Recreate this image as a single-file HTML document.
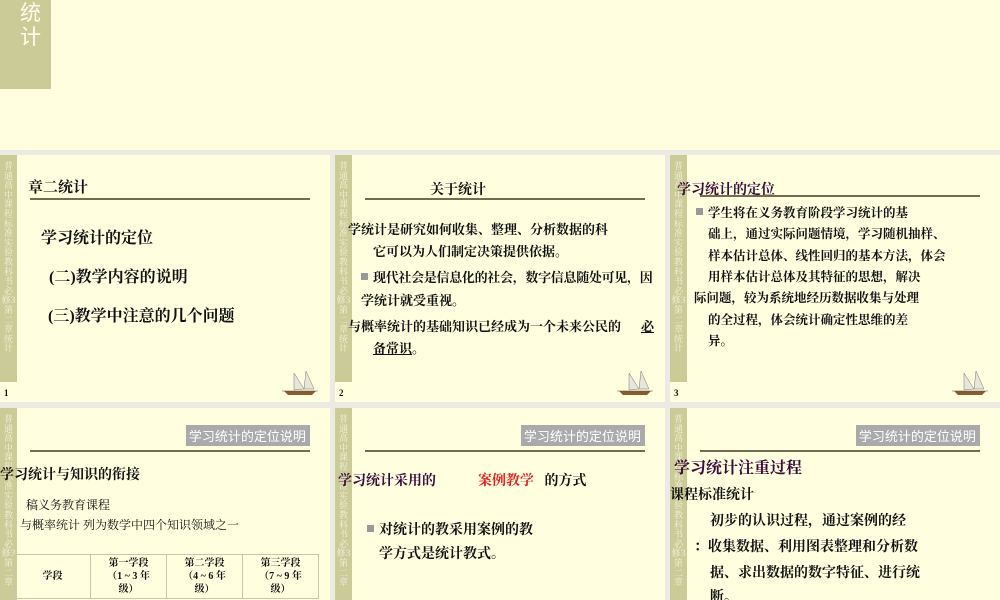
<!DOCTYPE html><html><head><meta charset="utf-8"><style>
*{margin:0;padding:0;box-sizing:border-box}
html,body{width:1000px;height:600px;overflow:hidden}
body{background:#ebebe4;font-family:"Liberation Serif","Noto Serif CJK SC","Noto Sans CJK SC",serif;color:#111;position:relative}
.top{position:absolute;left:0;top:0;width:1000px;height:150px;background:#ffffe0}
.tsb{position:absolute;left:0;top:0;width:51px;height:89px;background:#cbcb98;color:#fffff0;font-family:"Noto Sans CJK SC",sans-serif;font-size:21px;line-height:24px;padding-left:20px;}
.s{position:absolute;width:330px;background:#ffffe0;overflow:hidden}
.sb{position:absolute;left:0;top:0;width:17px;height:227px;background:#cbcb98;color:#f2f2dc;font-size:9px;line-height:9.6px;text-align:center;padding-top:6px;font-family:"Noto Serif CJK SC",serif;word-break:break-all;overflow:hidden}
.ln{position:absolute;left:30px;width:280px;height:2px;background:#6e6e55;top:43px}
.t{position:absolute;white-space:nowrap;font-weight:bold}
.n{position:absolute;left:4px;top:233px;font-size:9px;font-weight:bold}
.ship{position:absolute;left:282px;top:214px}
.gb{position:absolute;left:186px;top:17px;width:124px;height:21px;background:#aaaaaa;color:#fff;font-size:13px;line-height:21px;font-family:"Noto Sans CJK SC",sans-serif}
.sq{display:inline-block;width:7px;height:7px;background:#999;margin-right:5px;vertical-align:2px}
table{position:absolute;left:14px;top:146px;border-collapse:collapse;font-size:10px;font-weight:bold}
td{border:1px solid #c8c8a8;text-align:center;width:76px;height:44px;line-height:13px}
</style></head><body>
<div class="top"><div class="tsb">统<br>计</div></div>

<svg width="0" height="0" style="position:absolute"><defs><g id="sh"><path d="M2 22 L34 22 L30 26 L6 26Z" fill="#8a5a30"/><path d="M12 21 L12 4 L22 20Z M22 20 L24 2 L32 20Z" fill="#e8e6d8" stroke="#777" stroke-width=".5"/><line x1="0" y1="22" x2="36" y2="22" stroke="#555" stroke-width=".6"/></g></defs></svg>

<div class="s" style="left:0;top:155px;height:247px">
<div class="sb">普通高中课程标准实验教科书 必修3 第二章 统计</div>
<div class="t" style="left:28px;top:21px;font-size:15px">章二统计</div>
<div class="ln"></div>
<div class="t" style="left:41px;top:70px;font-size:16px">学习统计的定位</div>
<div class="t" style="left:49px;top:109px;font-size:16px">(二)教学内容的说明</div>
<div class="t" style="left:48px;top:148px;font-size:16px">(三)教学中注意的几个问题</div>
<svg class="ship" width="36" height="28"><use href="#sh"/></svg>
<div class="n">1</div>
</div>

<div class="s" style="left:335px;top:155px;height:247px">
<div class="sb">普通高中课程标准实验教科书 必修3 第二章 统计</div>
<div class="t" style="left:95px;top:24px;font-size:14px">关于统计</div>
<div class="ln"></div>
<div class="t" style="left:13px;top:64px;font-size:13px">学统计是研究如何收集、整理、分析数据的科</div>
<div class="t" style="left:38px;top:86px;font-size:13px">它可以为人们制定决策提供依据。</div>
<div class="t" style="left:26px;top:112px;font-size:13px;letter-spacing:-0.3px"><span class="sq"></span>现代社会是信息化的社会，数字信息随处可见，因</div>
<div class="t" style="left:26px;top:135px;font-size:13px">学统计就受重视。</div>
<div class="t" style="left:13px;top:161px;font-size:13px">与概率统计的基础知识已经成为一个未来公民的</div>
<div class="t" style="left:306px;top:161px;font-size:13px"><u>必</u></div>
<div class="t" style="left:38px;top:183px;font-size:13px"><u>备常识</u>。</div>
<svg class="ship" width="36" height="28"><use href="#sh"/></svg>
<div class="n">2</div>
</div>

<div class="s" style="left:670px;top:155px;height:247px">
<div class="sb">普通高中课程标准实验教科书 必修3 第二章 统计</div>
<div class="t" style="left:7px;top:24px;font-size:14px;color:#3a0a3a">学习统计的定位</div>
<div class="ln" style="top:40px;left:30px"></div>
<div class="t" style="left:26px;top:48px;font-size:12.5px"><span class="sq"></span>学生将在义务教育阶段学习统计的基</div>
<div class="t" style="left:38px;top:69px;font-size:12.5px">础上，通过实际问题情境，学习随机抽样、</div>
<div class="t" style="left:38px;top:91px;font-size:12.5px">样本估计总体、线性回归的基本方法，体会</div>
<div class="t" style="left:38px;top:112px;font-size:12.5px">用样本估计总体及其特征的思想，解决</div>
<div class="t" style="left:24px;top:133px;font-size:12.5px">际问题，较为系统地经历数据收集与处理</div>
<div class="t" style="left:38px;top:155px;font-size:12.5px">的全过程，体会统计确定性思维的差</div>
<div class="t" style="left:38px;top:176px;font-size:12.5px">异。</div>
<svg class="ship" width="36" height="28"><use href="#sh"/></svg>
<div class="n">3</div>
</div>

<div class="s" style="left:0;top:408px;height:192px">
<div class="sb">普通高中课程标准实验教科书 必修3 第二章</div>
<div class="gb">&nbsp;学习统计的定位说明</div>
<div class="ln" style="top:42px"></div>
<div class="t" style="left:0;top:56px;font-size:14px">学习统计与知识的衔接</div>
<div class="t" style="left:26px;top:88px;font-size:12px;font-weight:normal">稿义务教育课程</div>
<div class="t" style="left:20px;top:108px;font-size:12px;font-weight:normal">与概率统计 列为数学中四个知识领域之一</div>
<table><tr><td>学段</td><td>第一学段<br>（1 ~ 3 年<br>级）</td><td>第二学段<br>（4 ~ 6 年<br>级）</td><td>第三学段<br>（7 ~ 9 年<br>级）</td></tr></table>
</div>

<div class="s" style="left:335px;top:408px;height:192px">
<div class="sb">普通高中课程标准实验教科书 必修3 第二章</div>
<div class="gb">&nbsp;学习统计的定位说明</div>
<div class="ln" style="top:42px"></div>
<div class="t" style="left:3px;top:62px;font-size:14px;color:#3a0a3a">学习统计采用的&nbsp;&nbsp;&nbsp;&nbsp;&nbsp;&nbsp;&nbsp;&nbsp;&nbsp;&nbsp;&nbsp;&nbsp;<span style="color:#e02020">案例教学</span>&nbsp;&nbsp;&nbsp;<span style="color:#111">的方式</span></div>
<div class="t" style="left:32px;top:111px;font-size:14px"><span class="sq"></span>对统计的教采用案例的教</div>
<div class="t" style="left:44px;top:135px;font-size:14px">学方式是统计教式。</div>
</div>

<div class="s" style="left:670px;top:408px;height:192px">
<div class="sb">普通高中课程标准实验教科书 必修3 第二章</div>
<div class="gb">&nbsp;学习统计的定位说明</div>
<div class="ln" style="top:42px"></div>
<div class="t" style="left:4px;top:47px;font-size:16px;color:#3a0a3a">学习统计注重过程</div>
<div class="t" style="left:0;top:76px;font-size:14px">课程标准统计</div>
<div class="t" style="left:40px;top:102px;font-size:14px">初步的认识过程，通过案例的经</div>
<div class="t" style="left:24px;top:128px;font-size:14px">：收集数据、利用图表整理和分析数</div>
<div class="t" style="left:40px;top:154px;font-size:14px">据、求出数据的数字特征、进行统</div>
<div class="t" style="left:40px;top:178px;font-size:14px">断。</div>
</div>
</body></html>
